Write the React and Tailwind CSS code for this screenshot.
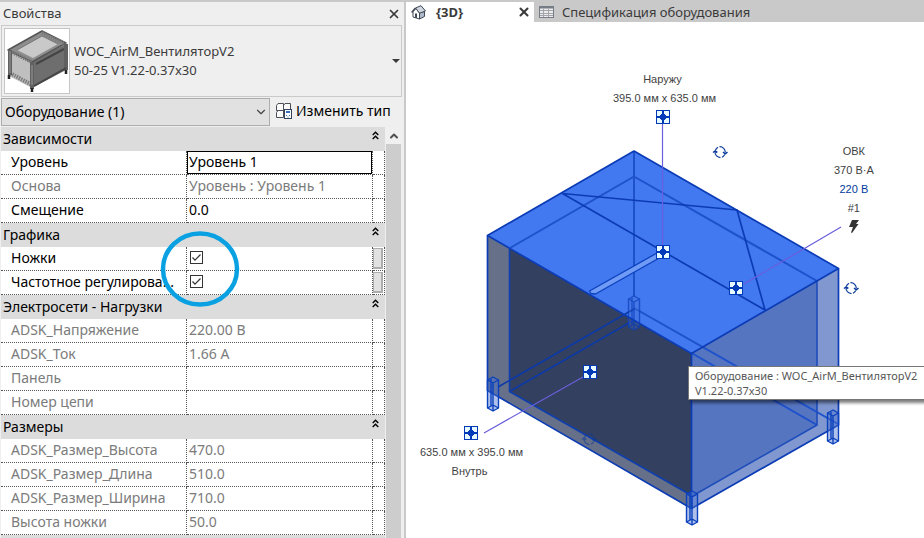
import { useState } from "react";
import { ChevronDown, ChevronUp, X } from "lucide-react";

const groups = [
  {
    title: "Зависимости",
    rows: [
      { name: "Уровень", value: "Уровень 1", kind: "text", focused: true },
      { name: "Основа", value: "Уровень : Уровень 1" },
      { name: "Смещение", value: "0.0", kind: "text" },
    ],
  },
  {
    title: "Графика",
    rows: [
      { name: "Ножки", kind: "check" },
      { name: "Частотное регулирова...", kind: "check" },
    ],
  },
  {
    title: "Электросети - Нагрузки",
    rows: [
      { name: "ADSK_Напряжение", value: "220.00 В" },
      { name: "ADSK_Ток", value: "1.66 А" },
      { name: "Панель", value: "" },
      { name: "Номер цепи", value: "" },
    ],
  },
  {
    title: "Размеры",
    rows: [
      { name: "ADSK_Размер_Высота", value: "470.0" },
      { name: "ADSK_Размер_Длина", value: "510.0" },
      { name: "ADSK_Размер_Ширина", value: "710.0" },
      { name: "Высота ножки", value: "50.0" },
    ],
  },
];

const DoubleChevron = () => (
  <svg viewBox="0 0 7 9" className="w-[7px] h-[9px]" fill="none" stroke="#000" strokeWidth="1.4">
    <path d="M.7 4 3.5 1.2 6.3 4M.7 8 3.5 5.2 6.3 8" />
  </svg>
);

const Preview = () => (
  <svg viewBox="0 0 64 64" className="w-16 h-16" strokeLinejoin="round">
    <path d="M3 21 37 2 61 14 27 33Z" fill="#8d8d8d" />
    <path d="M12 21 37 7 53 15 28 29Z" fill="#c9c9c9" />
    <path d="M4 21 27 33V59L4 47Z" fill="#bfbfbf" />
    <path d="M27 33 61 15V41L27 59Z" fill="#6e6e6e" />
    <g fill="none" stroke="#555">
      <path d="M3 21 37 2 61 14 27 33Z" strokeWidth="1.5" />
      <path d="M12 21 37 7 53 15" stroke="#777" />
      <path d="M5 22 27 33M5 44 27 56M37 4 60 15" strokeWidth="4" strokeDasharray="1.500 1" stroke="#7b7b7b" />
      <path d="M5 21V46M27 33V60M61 15V41" strokeWidth="4" stroke="#606060" />
      <path d="M5 22V44M27 36V56" stroke="#9a9a9a" />
      <path d="M29 57 61 39M31 35 59 20" strokeWidth="2" stroke="#444" />
      <path d="M4 46V50M27 59V63M61 41V45" strokeWidth="2.500" stroke="#222" />
    </g>
  </svg>
);

const EditTypeIcon = () => (
  <svg viewBox="0 0 16 16" className="w-4 h-4 shrink-0" fill="#fafafa" stroke="#4a4f58">
    <path d="M.5 2.5 2 .5H7.5V7.5H.5ZM7.5 2.5 9 .5H14.500V7.500H7.500ZM.5 9.500 2 7.500H7.500V14.500H.5Z" />
    <rect x="8.500" y="6.500" width="7" height="9" fill="#fff" stroke="#33415e" />
    <path d="M10 8h4v2h-4z" fill="#2f6fc4" stroke="none" />
    <path d="M10 12.500h1M13 12.500h1M11.500 14h1" stroke="#2f6fc4" />
  </svg>
);

const HouseIcon = () => (
  <svg viewBox="0 0 15 15" className="w-[15px] h-[15px] shrink-0" strokeLinejoin="round">
    <path d="M2 6.500 5 3.500 8.500 8V14L2 12Z" fill="#fff" stroke="#3d4654" />
    <path d="M8.500 8 13.500 6.500V11.500L8.500 14Z" fill="#aeb9c9" stroke="#3d4654" />
    <path d="M4.500 3 10 .7 14.500 6 8.500 8.200Z" fill="#cfd6e0" stroke="#3d4654" />
    <path d="M.7 7.500 4.500 3" stroke="#3d4654" strokeWidth="1.500" />
    <path d="M4 8.500h2v4.500l-2-.6z" fill="#3d4654" />
  </svg>
);

const ScheduleIcon = () => (
  <svg viewBox="0 0 15 12" className="w-[15px] h-3 shrink-0" fill="none" stroke="#777d86">
    <rect x=".5" y=".5" width="14" height="11" fill="#ececec" />
    <path d="M.5 1.500h14" strokeWidth="2" />
    <path d="M1 4.500h13M1 7.500h13M1 9.500h13M4.500 3v8M9.500 3v8" stroke="#a2a6ac" />
  </svg>
);

const CheckCell = ({ id }) => {
  const [checked, setChecked] = useState(true);
  return (
    <span className="grid w-[13px] h-[13px]">
      <input
        id={id}
        type="checkbox"
        checked={checked}
        onChange={(e) => setChecked(e.target.checked)}
        className="peer col-start-1 row-start-1 appearance-none w-[13px] h-[13px] bg-white border border-[#333]"
      />
      <svg
        viewBox="0 0 13 13"
        className="col-start-1 row-start-1 pointer-events-none hidden peer-checked:block"
        fill="none"
        stroke="#333"
        strokeWidth="1.2">
        <path d="M2.500 6.500 5 9.200 10.500 3.500" />
      </svg>
    </span>
  );
};

const PropertyRow = ({ row, id }) => {
  const readOnly = !row.kind;
  return (
    <tr className={readOnly ? "h-6 bg-white text-[#7b7b7b]" : "h-6 bg-white text-black"}>
      <th className="p-0 pl-2.5 pb-0.5 font-normal text-left whitespace-nowrap border-b border-r border-dotted border-[#555]">
        <label htmlFor={readOnly ? undefined : id}>{row.name}</label>
      </th>
      <td className="p-0 border-b border-r border-dotted border-[#555]">
        {row.kind === "text" && (
          <input
            id={id}
            type="text"
            defaultValue={row.value}
            className={
              row.focused
                ? "block w-full h-[23px] pb-0.5 px-px border border-black outline-none"
                : "block w-full h-[23px] pb-0.5 px-0.5 outline-none"
            }
          />
        )}
        {row.kind === "check" && (
          <div className="pl-[3px] pb-0.5">
            <CheckCell id={id} />
          </div>
        )}
        {readOnly && <span className="block pl-0.5 pb-0.5">{row.value}</span>}
      </td>
      <td className="p-0 border-b border-r border-dotted border-[#555]">
        {row.kind === "check" && (
          <button
            aria-label={`Связать параметр: ${row.name}`}
            className="block mx-auto w-2.5 h-[21px] bg-[#e1e1e1] border border-[#adadad] border-r-2 border-b-2"
          />
        )}
      </td>
    </tr>
  );
};

const PropertyGrid = () => (
  <div className="relative flex-1 min-w-0">
    <table className="w-full table-fixed border-separate border-spacing-0 text-sm leading-5">
      <colgroup>
        <col />
        <col className="w-[186px]" />
        <col className="w-3" />
      </colgroup>
      {groups.map((group, g) => (
        <tbody key={group.title}>
          <tr className="h-6 bg-[#dcdcdc] text-black">
            <th colSpan={3} className="p-0 pl-0.5 font-normal text-left">
              <div className="flex items-center justify-between pr-1.5">
                {group.title}
                <button aria-label={`Свернуть ${group.title}`} className="pb-2">
                  <DoubleChevron />
                </button>
              </div>
            </th>
          </tr>
          {group.rows.map((row, r) => (
            <PropertyRow key={row.name} row={row} id={`prop-${g}-${r}`} />
          ))}
        </tbody>
      ))}
      <tbody>
        <tr className="h-6 bg-[#dcdcdc]">
          <th colSpan={3} className="p-0" />
        </tr>
      </tbody>
    </table>
    {/* highlight ring around the two tick boxes */}
    <svg
      viewBox="0 0 80 76"
      className="absolute left-[159px] top-[104px] w-20 h-[76px] pointer-events-none"
      fill="none"
      stroke="#0aa1e2"
      strokeWidth="4.5">
      <ellipse cx="40" cy="38" rx="37" ry="35.500" />
    </svg>
  </div>
);

const PropertiesPanel = () => (
  <aside className="flex flex-col shrink-0 w-[404px] h-full pl-px bg-[#efefef] text-[#3b3b3b]">
    <div className="flex items-center justify-between h-[23px] pl-0.5 pr-[3px] shrink-0">
      <h2 className="text-[13px]">Свойства</h2>
      <button aria-label="Закрыть">
        <X className="w-3.5 h-3.5" strokeWidth={3} />
      </button>
    </div>

    <button className="flex items-center h-[72px] shrink-0 mr-0.5 pl-0.5 pr-px border border-[#cacaca] text-left">
      <span className="bg-white border border-[#c6c6c6]">
        <Preview />
      </span>
      <span className="flex-1 pl-1 text-[13px] leading-[19px]">
        WOC_AirM_ВентиляторV2
        <br />
        50-25 V1.22-0.37x30
      </span>
      <svg viewBox="0 0 8 4" className="w-2 h-1" fill="#3b3b3b">
        <path d="M0 0h8L4 4z" />
      </svg>
    </button>

    <div className="flex items-start h-[30px] pt-px shrink-0 text-sm text-black">
      <div className="grid items-center w-[269px]">
        <select
          aria-label="Категория"
          className="col-start-1 row-start-1 appearance-none w-full h-7 pl-[3px] bg-[#e1e1e1] border border-[#adadad]">
          <option>Оборудование (1)</option>
        </select>
        <ChevronDown
          className="col-start-1 row-start-1 justify-self-end mr-0.5 w-3.5 h-3.5 text-[#444] pointer-events-none"
          strokeWidth={2}
        />
      </div>
      <button className="flex items-center gap-1 h-[26px] pl-1.5 whitespace-nowrap">
        <EditTypeIcon />
        Изменить тип
      </button>
    </div>

    <div className="flex flex-1 min-h-0 overflow-hidden">
      <PropertyGrid />
      <div className="flex flex-col items-center w-[15px] mr-[3px] ml-px bg-[#f0f0f0]">
        <button aria-label="Вверх" className="flex items-center h-[17px] shrink-0">
          <ChevronUp className="w-3 h-3 text-[#505050]" strokeWidth={4} />
        </button>
        <div className="flex-1 w-full bg-[#cdcdcd]" />
      </div>
    </div>
  </aside>
);

const Connector = ({ x, y }) => (
  <g transform={`translate(${x - 7} ${y - 7})`} shapeRendering="crispEdges">
    <rect x=".5" y=".5" width="13" height="13" fill="#e6faff" stroke="#003ab8" />
    <path d="M6 1h2v12H6zM1 6h12v2H1z" fill="#003ab8" />
    <path d="M5 4h4v1h1v4h-1v1H5V9H4V5h1z" fill="#003ab8" />
  </g>
);

const Rotate = ({ x, y }) => (
  <g transform={`translate(${x - 7} ${y - 6})`} fill="none" stroke="#0b3a9c" strokeWidth="1.2">
    <path d="M2.300 4.500A5.500 5.500 0 0 1 5 1.200M6.500.7A5.500 5.500 0 0 1 12.300 6.500M11.700 8.500A5.500 5.500 0 0 1 9 11.200M7.500 11.600A5.500 5.500 0 0 1 2 6" />
    <path d="M0 6.500 2 5 4.300 6.500M10 6 12.300 7.800 14.500 6" strokeWidth="1.500" />
  </g>
);

// a foot of the frame: hexagonal outline with its inner edges
const Leg = ({ x, y }) => (
  <g transform={`translate(${x} ${y})`} stroke="#0b41bd" strokeWidth="1.400" strokeLinejoin="round">
    <path d="M.5 4 6 1 11.500 4V32L6 35 .5 32Z" fill="#4d74d0" fillOpacity=".45" />
    <path d="M.5 4 6 7 11.500 4M6 7V35M4 3V30M.5 32 6 29 11.500 32" fill="none" />
  </g>
);

const Model = () => (
  <svg
    viewBox="406 22 518 516"
    className="absolute left-0 top-0 w-[518px] h-[516px]"
    fill="none"
    strokeLinejoin="round">
    <path d="M487.500 235.500 691.500 353.500V508.500L487.500 390.500Z" fill="#667089" />
    <path d="M509.500 248 691.500 353.500V495.500L509.500 391.500Z" fill="#344060" />
    <path d="M691.500 353.500 838.500 268.500V425L691.500 508.500Z" fill="#8098cf" />
    <path d="M691.500 353.500 817 281V425L691.500 496.500Z" fill="#5575c0" />
    <path d="M634 151 838.500 268.500 691.500 353.500 487.500 235.500Z" fill="#4278f0" />

    {/* edges seen through the faces */}
    <g stroke="#1e51cc" strokeWidth="2">
      <path d="M634 151V296M510 248 634 176.500 817 281M634 308 838 424M691.500 353 817 425" />
    </g>
    <g stroke="#0b3aa8" strokeWidth="1.600">
      <path d="M498 387 634 309M509.500 391.500 634 320" />
      <path d="M509.500 248V391.500L691.500 495.500" stroke="#0f3fae" />
      <path d="M817 281V425L691.500 496.500" stroke="#1e4dbb" />
    </g>

    <g opacity=".75">
      <Leg x={628} y={295} />
    </g>

    <path
      d="M589.500 291 657 253 661 257 595.500 294 591 293.500Z"
      fill="#6f9af6"
      stroke="#0b41bd"
      strokeWidth="1.300"
    />
    <g stroke="#0b3cb5" strokeWidth="1.700">
      <path d="M634 151 838.500 268.500 691.500 353.500 487.500 235.500Z" />
      <path d="M487.500 235.500V390.500L691.500 508.500 838.500 425V268.500M691.500 353.500V508.500" />
      <path d="M765 310 562.500 193.500 737 210Z" />
    </g>

    <Leg x={487} y={376} />
    <Leg x={686} y={490} />
    <Leg x={827} y={409} />

    <path d="M662.500 124V246M744 284 841 227M484 433 583 377" stroke="#6a5fdc" strokeWidth="1.200" />

    <Connector x={663} y={117} />
    <Connector x={663} y={252} />
    <Connector x={736} y={288} />
    <Connector x={590} y={372} />
    <Connector x={471} y={433} />
    <Rotate x={720} y={152} />
    <Rotate x={851} y={288} />
    <g opacity=".6">
      <Rotate x={589} y={439} />
    </g>
  </svg>
);

const Viewport = () => (
  <div className="relative flex-1 min-h-0 overflow-hidden bg-white font-['Liberation_Sans',sans-serif] text-[11px] leading-[19px] text-[#3f3f3f]">
    <Model />
    <div className="absolute left-[207px] top-12 flex flex-col items-center whitespace-nowrap">
      <span className="pr-1">Наружу</span>
      <span>395.0 мм x 635.0 мм</span>
    </div>
    <div className="absolute left-[14px] top-[421px] flex flex-col items-center whitespace-nowrap">
      <span>635.0 мм x 395.0 мм</span>
      <span className="pr-1">Внутрь</span>
    </div>
    <div className="absolute left-[428px] top-[120px] flex flex-col items-center whitespace-nowrap">
      <span>ОВК</span>
      <span>370 В·А</span>
      <span className="text-[#003a9c]">220 В</span>
      <span>#1</span>
      <svg viewBox="0 0 10 13" className="w-2.5 h-[13px] mt-0.5" fill="#333">
        <path d="M3 0H10L7 4H9.500L3 13 2 12.500 4 7H0Z" />
      </svg>
    </div>
    <div
      role="tooltip"
      className="absolute left-[282px] -right-2 top-[344px] py-px px-1.5 bg-white border border-[#767676] shadow-[3px_3px_3px_rgba(0,0,0,0.5)] font-['Noto_Sans',sans-serif] leading-[15px] text-[#575757] whitespace-nowrap">
      Оборудование : WOC_AirM_ВентиляторV2
      <br />
      V1.22-0.37x30
    </div>
  </div>
);

const ViewTabs = () => (
  <div role="tablist" className="flex h-5 shrink-0 text-[13px] leading-5 text-[#3b3b3b]">
    <div className="flex items-center w-32 pl-[5px] pr-[3px] bg-white">
      <button role="tab" aria-selected="true" className="flex items-center flex-1 gap-2.5 font-bold">
        <HouseIcon />
        {"{3D}"}
      </button>
      <button aria-label="Закрыть вид">
        <X className="w-3.5 h-3.5" strokeWidth={3.5} />
      </button>
    </div>
    <button role="tab" aria-selected="false" className="flex items-center gap-2 pl-[5px] whitespace-nowrap">
      <ScheduleIcon />
      Спецификация оборудования
    </button>
  </div>
);

const App = () => (
  <div className="flex h-screen pt-0.5 overflow-hidden bg-[#c9c9c9] font-['Noto_Sans','Open_Sans',sans-serif]">
    <PropertiesPanel />
    <main className="flex flex-col flex-1 min-w-0 ml-0.5">
      <ViewTabs />
      <Viewport />
    </main>
  </div>
);

export default App;
